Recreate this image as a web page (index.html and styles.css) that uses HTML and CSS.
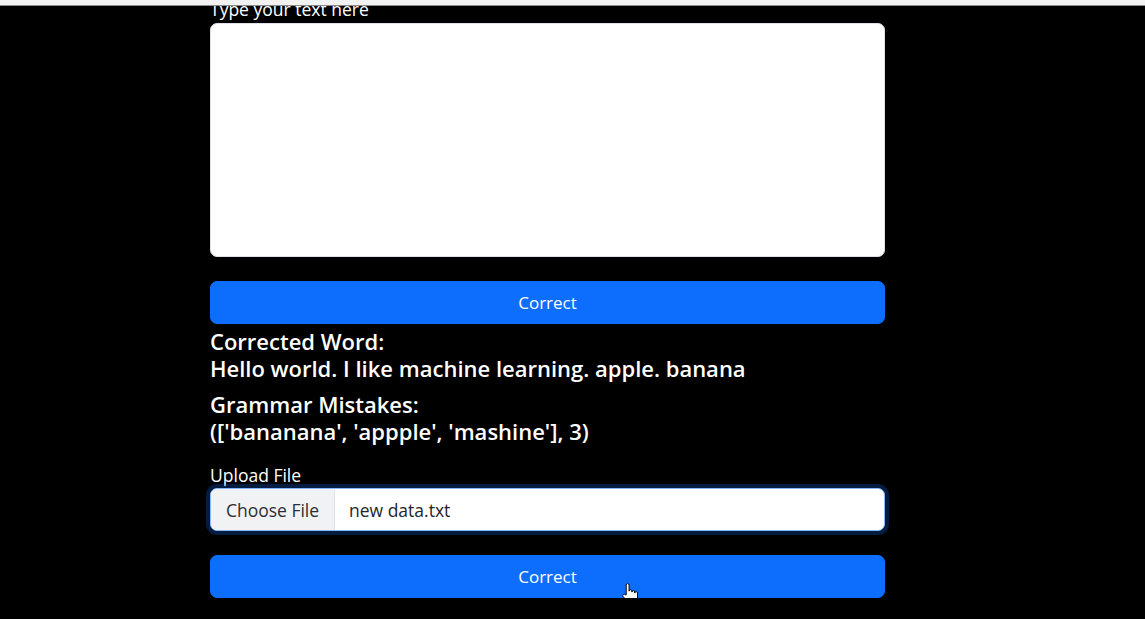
FILE: index.html
```html
<!DOCTYPE html>
<html lang="en">
<head>
<meta charset="utf-8">
<title>Grammar Corrector</title>
<link rel="stylesheet" href="styles.css">
</head>
<body>
<div class="topstrip"></div>
<main class="page">
  <form class="text-form">
    <label class="form-label first" for="txt">Type your text here</label>
    <textarea id="txt" class="textbox"></textarea>
    <button type="button" class="btn-correct">Correct</button>
  </form>
  <section class="result">
    <h5 class="res-title">Corrected Word:</h5>
    <h5 class="res-value">Hello world. I like machine learning. apple. banana</h5>
  </section>
  <section class="result second">
    <h5 class="res-title">Grammar Mistakes:</h5>
    <h5 class="res-value">(['bananana', 'appple', 'mashine'], 3)</h5>
  </section>
  <form class="file-form">
    <label class="form-label upload" for="file">Upload File</label>
    <div class="file-input">
      <span class="file-btn">Choose File</span>
      <span class="file-name">new data.txt</span>
    </div>
    <button type="button" class="btn-correct lower">Correct
      <svg class="cursor" viewBox="0 0 17 22" width="16" height="21" aria-hidden="true">
        <path d="M4.5 12.5 V2 a1.5 1.5 0 0 1 3 0 V8.5 a1.5 1.5 0 0 1 3 0 V9.5 a1.5 1.5 0 0 1 3 0 V10.5 a1.5 1.5 0 0 1 3 0 V16 c0 3 -2 5.5 -5 5.5 H9.5 c-2 0 -3 -1 -4 -2.5 L1.2 14.2 a1.4 1.4 0 0 1 2.2 -1.8 Z" fill="#fff" stroke="#000" stroke-width="1"/>
      </svg>
    </button>
  </form>
</main>
</body>
</html>
```

FILE: styles.css
```css
html, body {
  margin: 0;
  padding: 0;
  background: #000;
  overflow: hidden;
}
body {
  font-family: "Open Sans", "Noto Sans", sans-serif;
  color: #fff;
}
.topstrip {
  position: fixed;
  top: 0;
  left: 0;
  right: 0;
  height: 5px;
  background: #f2f2f2;
  border-bottom: 1px solid #8a8a8a;
  z-index: 5;
}
.page {
  width: 675px;
  margin: 0 0 0 210px;
}
.text-form, .file-form {
  display: flex;
  flex-direction: column;
}
.form-label {
  display: block;
  font-size: 17.5px;
  line-height: 21px;
  color: #fff;
}
.form-label.first {
  margin-top: -1px;
  margin-bottom: 3px;
}
.textbox {
  box-sizing: border-box;
  width: 675px;
  height: 234px;
  margin: 0;
  background: #fff;
  border: 1px solid #dee2e6;
  border-radius: 7px;
  resize: none;
  font-family: inherit;
}
.btn-correct {
  box-sizing: border-box;
  width: 675px;
  height: 43px;
  margin-top: 24px;
  padding: 0;
  background: #0d6efd;
  border: 1px solid #0d6efd;
  border-radius: 7px;
  color: #fff;
  font-family: inherit;
  font-size: 17px;
  line-height: 1;
  text-align: center;
}
.btn-correct.lower {
  position: relative;
}
.cursor {
  position: absolute;
  left: 411px;
  top: 27px;
}
.result {
  margin-top: 4px;
}
.result.second {
  margin-top: 9px;
}
.res-title, .res-value {
  margin: 0;
  font-size: 22px;
  line-height: 27px;
  font-weight: 600;
  color: #fff;
}
.form-label.upload {
  margin-top: 20px;
  margin-bottom: 2px;
}
.file-input {
  box-sizing: border-box;
  display: flex;
  height: 43px;
  background: #fff;
  border: 1px solid #86b7fe;
  border-radius: 7px;
  box-shadow: 0 0 0 4px rgba(13, 110, 253, 0.25);
  overflow: hidden;
  font-size: 17.5px;
  color: #212529;
}
.file-btn {
  display: flex;
  align-items: center;
  padding: 0 14px;
  width: 124px;
  box-sizing: border-box;
  justify-content: center;
  background: #f1f2f4;
  border-right: 1px solid #dee2e6;
  color: #2b2f33;
}
.file-name {
  display: flex;
  align-items: center;
  padding-left: 14px;
}
```
